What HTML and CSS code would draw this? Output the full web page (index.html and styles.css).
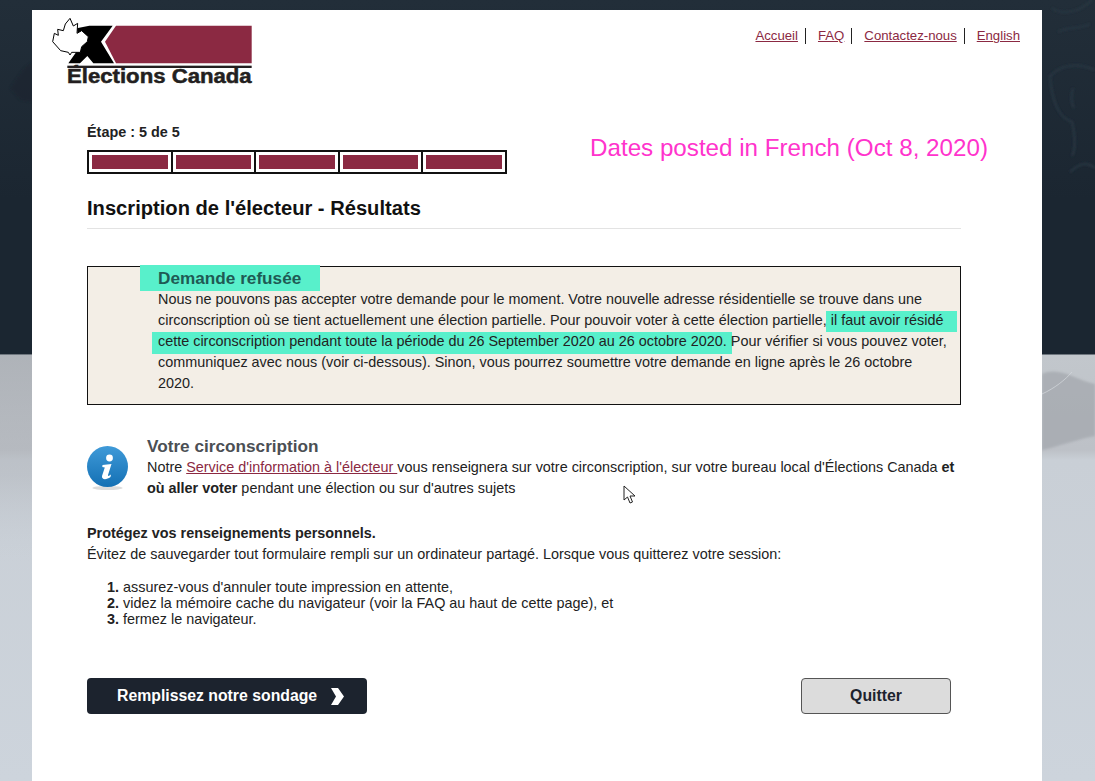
FILE: index.html
```html
<!DOCTYPE html>
<html lang="fr">
<head>
    <meta charset="UTF-8">
    <meta name="viewport" content="width=device-width, initial-scale=1.0">
    <title>Inscription de l'électeur - Résultats</title>
    <link rel="stylesheet" href="styles.css">
</head>
<body>
    <svg class="backdrop" viewBox="0 0 1095 781" preserveAspectRatio="none" aria-hidden="true">
        <defs>
            <linearGradient id="leftFade" x1="0" y1="0" x2="0" y2="1">
                <stop offset="0" stop-color="#a8acb2" stop-opacity="0.75"/>
                <stop offset="0.55" stop-color="#b2b6bc" stop-opacity="0.5"/>
                <stop offset="1" stop-color="#cdd4dc" stop-opacity="0"/>
            </linearGradient>
            <filter id="soft"><feGaussianBlur stdDeviation="1"/></filter>
        </defs>
        <g fill="none" stroke="#27343f" stroke-width="2.500" filter="url(#soft)">
            <path d="M1052 8 C1062 16 1080 12 1092 0 M1058 32 C1068 26 1078 30 1090 24 M1095 70 C1075 62 1060 66 1050 76 C1052 105 1060 118 1072 122 C1076 140 1075 150 1072 156 M1073 88 C1070 98 1072 104 1074 108 M1095 168 C1085 160 1078 165 1070 172"/>
        </g>
        <path d="M10 88 L24 68 L32 62 L32 102 L20 100 Z" fill="#1a242d" opacity="0.5" filter="url(#soft)"/>
        <rect x="0" y="355" width="32" height="220" fill="url(#leftFade)"/>
        <path d="M1042 374 C1060 366 1075 380 1095 384 L1095 436 C1075 440 1060 446 1042 450 Z" fill="#a4a8ae" opacity="0.75" filter="url(#soft)"/>
        <path d="M1042 394 C1055 388 1065 380 1072 372" fill="none" stroke="#d5dade" stroke-width="1" opacity="0.7"/>
    </svg>

    <main class="panel">
        <header class="top">
            <svg class="logo" viewBox="60 48 612 216" role="img" aria-label="Élections Canada">
                <polygon points="225,125 258,77 665,77 665,190 258,190" fill="#8b2942"/>
                <polygon points="178,77 248,77 213,125 252,190 190,190 172,168 150,190 115,190 150,140 140,85" fill="#000"/>
                <polygon points="120,55 130,78 143,70 141,100 155,92 175,110 172,125 155,140 151,157 125,157 120,165 115,157 92,152 68,125 73,100 85,106 83,88 100,92 106,72" fill="#fff" stroke="#000" stroke-width="3" stroke-linejoin="round"/>
                <rect x="112" y="197" width="553" height="7" fill="#231f20"/>
                <text class="logo-name" x="111" y="250" textLength="554" lengthAdjust="spacingAndGlyphs">Élections Canada</text>
            </svg>
            <ul class="top-nav">
                <li><a href="#">Accueil</a></li>
                <li><a href="#">FAQ</a></li>
                <li><a href="#">Contactez-nous</a></li>
                <li><a href="#">English</a></li>
            </ul>
        </header>

        <div class="content">
            <p class="step-label">Étape : 5 de 5</p>
            <div class="steps">
                <div class="step"><span></span></div>
                <div class="step"><span></span></div>
                <div class="step"><span></span></div>
                <div class="step"><span></span></div>
                <div class="step"><span></span></div>
            </div>

            <h1>Inscription de l'électeur - Résultats</h1>

            <section class="notice">
                <span class="hl hl-title"></span>
                <span class="hl hl-line3"></span>
                <span class="hl hl-line4"></span>
                <h2>Demande refusée</h2>
                <p>Nous ne pouvons pas accepter votre demande pour le moment. Votre nouvelle adresse résidentielle se trouve dans une circonscription où se tient actuellement une élection partielle. Pour pouvoir voter à cette élection partielle, il faut avoir résidé cette circonscription pendant toute la période du 26 September 2020 au 26 octobre 2020. Pour vérifier si vous pouvez voter, communiquez avec nous (voir ci-dessous). Sinon, vous pourrez soumettre votre demande en ligne après le 26 octobre 2020.</p>
            </section>

            <section class="riding">
                <svg class="info-icon" viewBox="2 0 41 46" aria-hidden="true">
                    <defs>
                        <linearGradient id="infoBlue" x1="0" y1="0" x2="0" y2="1">
                            <stop offset="0" stop-color="#3f9ad8"/>
                            <stop offset="1" stop-color="#1470b4"/>
                        </linearGradient>
                    </defs>
                    <ellipse cx="22.500" cy="43" rx="15" ry="2" fill="#dcdcdc"/>
                    <circle cx="22.500" cy="21.500" r="20.500" fill="url(#infoBlue)"/>
                    <circle cx="24.500" cy="13" r="3.400" fill="#fff"/>
                    <path d="M17.500 20 L26.500 19 L23 30 C22.800 31.500 24 31 26 29.500 L25.500 32 C21.500 35 16.500 35 17 31 L19.800 22.500 L17.300 22 Z" fill="#fff"/>
                </svg>
                <div>
                    <h2>Votre circonscription</h2>
                    <p>Notre <a href="#">Service d'information à l'électeur </a>vous renseignera sur votre circonscription, sur votre bureau local d'Élections Canada <strong>et où aller voter</strong> pendant une élection ou sur d'autres sujets</p>
                </div>
            </section>

            <section class="privacy">
                <p class="privacy-title">Protégez vos renseignements personnels.</p>
                <p>Évitez de sauvegarder tout formulaire rempli sur un ordinateur partagé. Lorsque vous quitterez votre session:</p>
                <ol>
                    <li>assurez-vous d'annuler toute impression en attente,</li>
                    <li>videz la mémoire cache du navigateur (voir la FAQ au haut de cette page), et</li>
                    <li>fermez le navigateur.</li>
                </ol>
            </section>

            <div class="actions">
                <a class="btn-survey" href="#">Remplissez notre sondage
                    <svg class="chevron" viewBox="0 0 13 17" aria-hidden="true"><polygon points="0,0 7,0 13,8.500 7,17 0,17 5,8.500" fill="#fff"/></svg>
                </a>
                <a class="btn-quit" href="#">Quitter</a>
            </div>
        </div>

        <p class="annotation">Dates posted in French (Oct 8, 2020)</p>
        <svg class="cursor" viewBox="0 0 14 20" aria-hidden="true"><polygon points="1,1 1,15 4.500,12 7,18 9.500,17 7,11 12,11" fill="#fff" stroke="#222" stroke-width="1"/></svg>
    </main>
</body>
</html>
```

FILE: styles.css
```css
* {
    box-sizing: border-box;
}

html, body {
    height: 781px;
    overflow: hidden;
}

body {
    margin: 0;
    font-family: "Liberation Sans", Arial, sans-serif;
    font-size: 14.4px;
    color: #222;
    background: linear-gradient(#222e39 0, #1b2631 200px, #1b2631 354px, #c2c7cc 355px, #bdc1c7 450px, #c9cfd6 460px, #cdd4dc 781px);
}

p, h1, h2, ul, ol {
    margin: 0;
    padding: 0;
}

.backdrop {
    position: absolute;
    top: 0;
    left: 0;
    width: 1095px;
    height: 781px;
}

.panel {
    position: relative;
    width: 1010px;
    height: 771px;
    margin: 10px 0 0 32px;
    background: #fff;
}

.top {
    display: flex;
    justify-content: space-between;
    padding: 6px 22px 0 18px;
}

.logo {
    display: block;
    width: 204px;
    height: 72px;
}

.logo-name {
    font-family: "Liberation Sans", Arial, sans-serif;
    font-weight: bold;
    font-size: 60px;
    fill: #231f20;
    stroke: #231f20;
    stroke-width: 1.5px;
}

.top-nav {
    display: flex;
    list-style: none;
    height: 16px;
    margin-top: 12px;
    font-size: 13.2px;
    line-height: 16px;
}

.top-nav li {
    padding-right: 7px;
    margin-right: 12px;
    border-right: 1px solid #222;
}

.top-nav li:last-child {
    padding-right: 0;
    margin-right: 0;
    border-right: none;
}

a {
    color: #8b2942;
}

.content {
    width: 874px;
    margin-left: 55px;
    padding-top: 36px;
}

.step-label {
    font-weight: bold;
    line-height: 16px;
}

.steps {
    display: flex;
    width: 420px;
    height: 24px;
    margin-top: 10px;
    border: 2px solid #111;
}

.step {
    flex: 1;
    padding: 3px;
    border-left: 2px solid #111;
}

.step:first-child {
    border-left: none;
}

.step span {
    display: block;
    height: 100%;
    background: #8b2942;
}

h1 {
    margin-top: 22px;
    padding-bottom: 8px;
    font-size: 20.15px;
    line-height: 24px;
    color: #111;
    border-bottom: 1px solid #e3e3e3;
}

.notice {
    position: relative;
    height: 139px;
    margin-top: 37px;
    padding: 1px 8px 0 70px;
    background: #f3eee6;
    border: 1px solid #111;
}

.notice h2, .notice p {
    position: relative;
}

.notice h2 {
    font-size: 17.2px;
    line-height: 21px;
    color: #1f5a54;
}

.notice p {
    line-height: 21px;
}

.hl {
    position: absolute;
    background: #58f0cb;
}

.hl-title {
    top: -2px;
    left: 52px;
    width: 180px;
    height: 26px;
}

.hl-line3 {
    top: 44px;
    left: 738px;
    width: 131px;
    height: 21px;
}

.hl-line4 {
    top: 65px;
    left: 64px;
    width: 580px;
    height: 22px;
}

.riding {
    display: flex;
    gap: 19px;
    margin-top: 31px;
}

.info-icon {
    flex: none;
    width: 41px;
    height: 46px;
    margin-top: 9px;
}

.riding h2 {
    margin-bottom: 1px;
    font-size: 17.2px;
    line-height: 20px;
    color: #4b4f54;
}

.riding p {
    line-height: 21px;
}

.privacy {
    margin-top: 24px;
}

.privacy-title {
    font-weight: bold;
    line-height: 21px;
}

.privacy p {
    line-height: 21px;
}

.privacy ol {
    margin-top: 14px;
    padding-left: 36px;
    line-height: 16px;
}

.privacy li::marker {
    font-weight: bold;
}

.actions {
    display: flex;
    justify-content: space-between;
    align-items: center;
    width: 864px;
    margin-top: 51px;
}

.btn-survey, .btn-quit {
    display: flex;
    align-items: center;
    height: 36px;
    border-radius: 4px;
    font-size: 15.8px;
    font-weight: bold;
    text-decoration: none;
}

.btn-survey {
    gap: 14px;
    width: 280px;
    padding-left: 30px;
    background: #1c232e;
    color: #fff;
}

.chevron {
    width: 13px;
    height: 17px;
}

.btn-quit {
    justify-content: center;
    width: 150px;
    background: #dcdcdc;
    border: 1px solid #555;
    color: #1c232e;
}

.annotation {
    position: absolute;
    top: 124px;
    left: 558px;
    font-size: 24.2px;
    line-height: 28px;
    color: #ff33cc;
    white-space: nowrap;
}

.cursor {
    position: absolute;
    top: 475px;
    left: 591px;
    width: 14px;
    height: 20px;
}
```
